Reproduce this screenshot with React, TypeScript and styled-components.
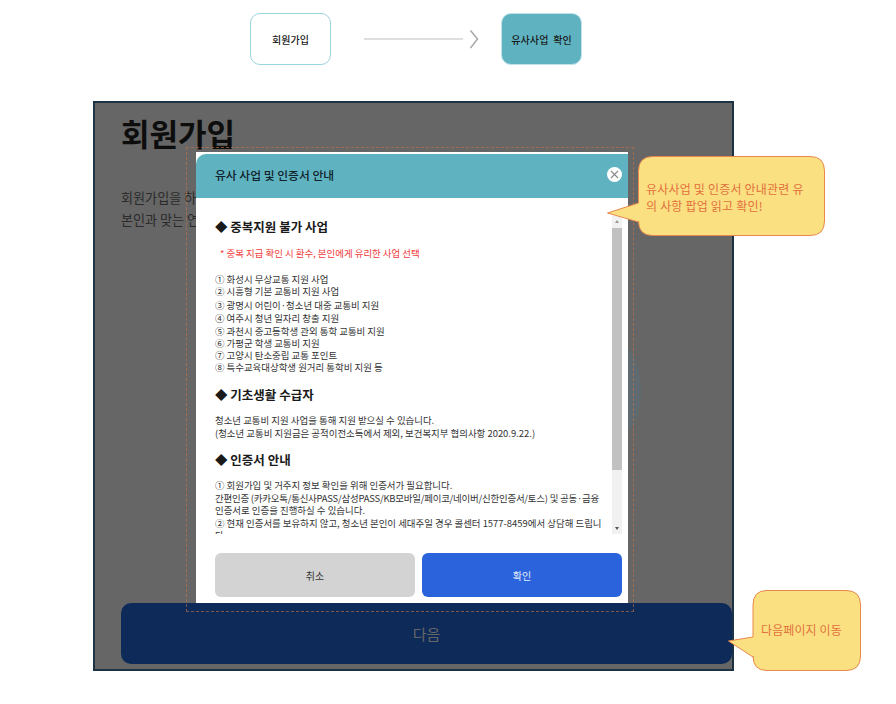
import React from "react";
import styled, { createGlobalStyle } from "styled-components";

const Global = createGlobalStyle`
  html, body { margin: 0; padding: 0; background: #fff; }
  body { font-family: "Noto Sans CJK KR", "Noto Sans", sans-serif; color: #222; }
  * { box-sizing: border-box; }
`;

const Page = styled.div`
  position: relative;
  width: 896px;
  height: 704px;
  overflow: hidden;
  background: #fff;
`;

const Flow = styled.div`
  display: flex;
  align-items: center;
  height: 52px;
  margin: 13px 0 36px 250px;
`;

const Step = styled.div<{ $active?: boolean }>`
  width: 81px;
  height: 52px;
  display: flex;
  align-items: center;
  justify-content: center;
  border-radius: 10px;
  border: 1px solid ${(p) => (p.$active ? "#bfe3e9" : "#9ad5de")};
  background: ${(p) => (p.$active ? "#5fb3c1" : "#fff")};
  font-size: 10px;
  font-weight: 500;
  letter-spacing: ${(p) => (p.$active ? "0.1px" : "0")};
  color: #1a1a1a;
  white-space: pre;
`;

const ArrowArt = styled.svg`
  display: block;
  width: 170px;
  height: 52px;
`;

const Frame = styled.div`
  position: relative;
  width: 641px;
  height: 570px;
  margin-left: 93px;
  border: 2px solid #1c3245;
  background: #666666;
  padding: 0 0 0 26px;
`;

const Title = styled.h1`
  margin: 9px 0 0;
  font-size: 31px;
  line-height: 42px;
  font-weight: 700;
  color: #0d0d0d;
`;

const Intro = styled.p`
  margin: 33px 0 0;
  font-size: 13.1px;
  line-height: 22px;
  color: #2a2a2a;
  white-space: pre;
`;

const NextButton = styled.div`
  position: absolute;
  left: 26px;
  bottom: 5px;
  width: 611px;
  height: 61px;
  display: flex;
  align-items: center;
  justify-content: center;
  border-radius: 10px;
  background: #0e2a59;
  color: #666;
  font-size: 15px;
`;

const GhostArc = styled.svg`
  position: absolute;
  left: 620px;
  top: 345px;
  width: 24px;
  height: 90px;
`;

const Guide = styled.div`
  position: absolute;
  left: 186px;
  top: 147px;
  width: 448px;
  height: 465px;
  border: 1px dashed rgba(205, 115, 65, 0.6);
  pointer-events: none;
`;

const Modal = styled.div`
  position: absolute;
  left: 196px;
  top: 152px;
  width: 432px;
  height: 451px;
  background: #fff;
  padding-top: 2px;
  display: flex;
  flex-direction: column;
`;

const ModalHeader = styled.div`
  height: 44px;
  flex: none;
  display: flex;
  align-items: center;
  justify-content: space-between;
  padding: 0 6px 4px 19px;
  background: #5fb3c1;
  border-top-left-radius: 10px;
  font-size: 11.8px;
  font-weight: 500;
  color: #10222b;
`;

const CloseDisc = styled.span`
  width: 15px;
  height: 15px;
  border-radius: 50%;
  background: #fff;
  display: flex;
  align-items: center;
  justify-content: center;
`;

const ScrollArea = styled.div`
  position: relative;
  flex: none;
  width: 407px;
  height: 318px;
  margin: 18px 0 0 19px;
  overflow: hidden;
`;

const Content = styled.div`
  width: 393px;
  font-size: 9.45px;
  color: #333;
`;

const Heading = styled.h2<{ $top: number }>`
  margin: ${(p) => p.$top}px 0 0;
  height: 18px;
  font-size: 12.5px;
  line-height: 18px;
  font-weight: 700;
  color: #1a1a1a;
`;

const Warn = styled.p`
  margin: 10px 0 0 5px;
  height: 14px;
  font-size: 9.45px;
  line-height: 14px;
  color: #f03a3a;
`;

const List = styled.ul`
  list-style: none;
  margin: 13px 0 0;
  padding: 0;
`;

const Item = styled.li<{ $h: number }>`
  height: ${(p) => p.$h}px;
  line-height: 12.5px;
  white-space: pre;
`;

const Para = styled.div`
  margin: 10px 0 0;
`;

const Line = styled.div<{ $tight?: boolean }>`
  line-height: 12.5px;
  white-space: nowrap;
  letter-spacing: ${(p) => (p.$tight ? "-0.21px" : "0")};
`;

const Track = styled.div`
  position: absolute;
  top: 0;
  right: 0;
  width: 10px;
  height: 318px;
  background: #f1f1f1;
`;

const ScrollTip = styled.i<{ $down?: boolean }>`
  position: absolute;
  left: 3px;
  ${(p) => (p.$down ? "bottom: 4px;" : "top: 4px;")}
  border-left: 2px solid transparent;
  border-right: 2px solid transparent;
  ${(p) => (p.$down ? "border-top: 3px solid #555;" : "border-bottom: 3px solid #999;")}
`;

const Thumb = styled.div`
  position: absolute;
  top: 12px;
  left: 0;
  width: 10px;
  height: 242px;
  background: #c1c1c1;
`;

const Actions = styled.div`
  display: flex;
  gap: 7px;
  margin: 19px 0 0 19px;
`;

const ActionButton = styled.div<{ $primary?: boolean }>`
  width: 200px;
  height: 44px;
  display: flex;
  align-items: center;
  justify-content: center;
  border-radius: 6px;
  font-size: 10px;
  background: ${(p) => (p.$primary ? "#2b63dd" : "#d3d3d3")};
  color: ${(p) => (p.$primary ? "#e8eefc" : "#333")};
`;

const Bubble = styled.div<{ $x: number; $y: number; $w: number; $h: number }>`
  position: absolute;
  left: ${(p) => p.$x}px;
  top: ${(p) => p.$y}px;
  width: ${(p) => p.$w}px;
  height: ${(p) => p.$h}px;
`;

const BubbleArt = styled.svg`
  position: absolute;
  inset: 0;
  width: 100%;
  height: 100%;
  overflow: visible;
`;

const BubbleText = styled.div<{ $left: number; $top: number; $size: number; $lh: number; $ls: number }>`
  position: absolute;
  left: ${(p) => p.$left}px;
  top: ${(p) => p.$top}px;
  font-size: ${(p) => p.$size}px;
  line-height: ${(p) => p.$lh}px;
  letter-spacing: ${(p) => p.$ls}px;
  color: #e2703c;
  white-space: pre;
`;

const list1: [string, number][] = [
  ["① 화성시 무상교통 지원 사업", 12],
  ["② 시흥형 기본 교통비 지원 사업", 14],
  ["③ 광명시 어린이·청소년 대중 교통비 지원", 13],
  ["④ 여주시 청년 일자리 창출 지원", 13],
  ["⑤ 과천시 중고등학생 관외 통학 교통비 지원", 12],
  ["⑥ 가평군 학생 교통비 지원", 12],
  ["⑦ 고양시 탄소중립 교통 포인트", 12],
  ["⑧ 특수교육대상학생 원거리 통학비 지원 등", 12],
];

export default function App() {
  return (
    <Page>
      <Global />
      <Flow>
        <Step>회원가입</Step>
        <ArrowArt viewBox="0 0 170 52">
          <line x1="33" y1="26" x2="132" y2="26" stroke="#bdbdbd" strokeWidth="1" />
          <polyline points="139.5,17.5 146.5,26 139.5,35" fill="none" stroke="#a8a8a8" strokeWidth="1.5" />
        </ArrowArt>
        <Step $active>{"유사사업  확인"}</Step>
      </Flow>
      <Frame>
        <Title>회원가입</Title>
        <Intro>{"회원가입을 하\n본인과 맞는 연"}</Intro>
        <NextButton>다음</NextButton>
      </Frame>
      <GhostArc viewBox="0 0 24 90">
        <ellipse cx="0" cy="45" rx="21" ry="45" fill="#5f6b70" />
      </GhostArc>
      <Guide />
      <Modal>
        <ModalHeader>
          유사 사업 및 인증서 안내
          <CloseDisc>
            <svg width="9" height="9" viewBox="0 0 9 9">
              <path d="M1 1 L8 8 M8 1 L1 8" stroke="#8a8a8a" strokeWidth="1.1" />
            </svg>
          </CloseDisc>
        </ModalHeader>
        <ScrollArea>
          <Content>
            <Heading $top={2}>◆ 중복지원 불가 사업</Heading>
            <Warn>* 중복 지급 확인 시 환수, 본인에게 유리한 사업 선택</Warn>
            <List>
              {list1.map(([text, h]) => (
                <Item key={text} $h={h}>{text}</Item>
              ))}
            </List>
            <Heading $top={13}>◆ 기초생활 수급자</Heading>
            <Para>
              <Line>청소년 교통비 지원 사업을 통해 지원 받으실 수 있습니다.</Line>
              <Line>(청소년 교통비 지원금은 공적이전소득에서 제외, 보건복지부 협의사항 2020.9.22.)</Line>
            </Para>
            <Heading $top={12}>◆ 인증서 안내</Heading>
            <Para>
              <Line>① 회원가입 및 거주지 정보 확인을 위해 인증서가 필요합니다.</Line>
              <Line $tight>간편인증 (카카오톡/통신사PASS/삼성PASS/KB모바일/페이코/네이버/신한인증서/토스) 및 공동·금융</Line>
              <Line>인증서로 인증을 진행하실 수 있습니다.</Line>
              <Line>② 현재 인증서를 보유하지 않고, 청소년 본인이 세대주일 경우 콜센터 1577-8459에서 상담해 드립니</Line>
              <Line>다.</Line>
            </Para>
          </Content>
          <Track>
            <ScrollTip />
            <Thumb />
            <ScrollTip $down />
          </Track>
        </ScrollArea>
        <Actions>
          <ActionButton>취소</ActionButton>
          <ActionButton $primary>확인</ActionButton>
        </Actions>
      </Modal>
      <Bubble $x={607} $y={156} $w={218} $h={80}>
        <BubbleArt viewBox="0 0 218 80">
          <path
            d="M46 0.5 H203 Q217.5 0.5 217.5 15 V65 Q217.5 79.5 203 79.5 H46 Q31.5 79.5 31.5 65 V66 L0.5 57 L31.5 47 V15 Q31.5 0.5 46 0.5 Z"
            fill="#fbe082"
            stroke="#e8884a"
            strokeWidth="1"
          />
        </BubbleArt>
        <BubbleText $left={39} $top={24} $size={12} $lh={17} $ls={0.2}>
          {"유사사업 및 인증서 안내관련 유\n의 사항 팝업 읽고 확인!"}
        </BubbleText>
      </Bubble>
      <Bubble $x={728} $y={590} $w={133} $h={81}>
        <BubbleArt viewBox="0 0 133 81">
          <path
            d="M39 0.5 H118 Q132.5 0.5 132.5 15 V66 Q132.5 80.5 118 80.5 H39 Q25 80.5 25 66 V67 L0.5 51 L25 47 V15 Q25 0.5 39 0.5 Z"
            fill="#fbe082"
            stroke="#e8884a"
            strokeWidth="1"
          />
        </BubbleArt>
        <BubbleText $left={33} $top={32} $size={12} $lh={16} $ls={0.1}>다음페이지 이동</BubbleText>
      </Bubble>
    </Page>
  );
}
